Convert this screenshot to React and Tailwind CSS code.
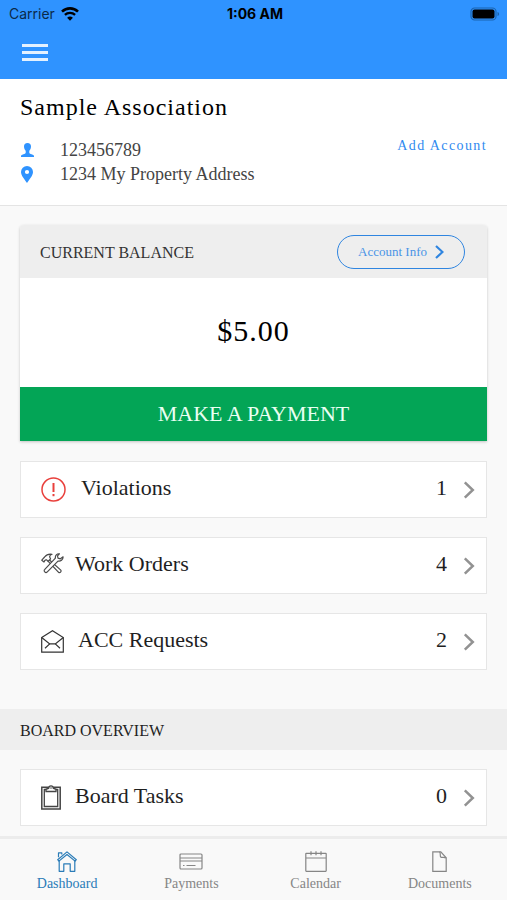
import { useState } from "react";

function WifiIcon() {
  return (
    <svg viewBox="0 0 18 14" className="h-[14px] w-[18px]" fill="none" aria-hidden="true">
      <path d="M1 4.600a11.600 11.600 0 0 1 16 0" stroke="#000" strokeWidth="2.600" />
      <path d="M3.900 7.900a7.400 7.400 0 0 1 10.200 0" stroke="#000" strokeWidth="2.300" />
      <path d="M9 13.800 6.100 10.800a4.200 4.200 0 0 1 5.800 0z" fill="#000" />
    </svg>
  );
}

function BatteryIcon() {
  return (
    <svg viewBox="0 0 31 14" className="h-[14px] w-[31px]" fill="none" aria-hidden="true">
      <rect x="1" y="1" width="25" height="12" rx="3.600" stroke="#1b64b0" strokeWidth="1.200" />
      <rect x="2.500" y="2.500" width="22" height="9" rx="2" fill="#000" />
      <path d="M27.500 5v4c1-.3 1.600-1.100 1.600-2s-.6-1.700-1.600-2z" fill="#1b64b0" />
    </svg>
  );
}

function UserIcon() {
  return (
    <svg viewBox="0 0 13 14" className="h-[14px] w-[13px]" fill="#2f93ff" aria-hidden="true">
      <path d="M6.500 0C8.800 0 10 1.500 10 3.500c0 1.700-.8 3.400-1.700 4.300v1.900c0 .5.300.8.800 1 1.900.6 3.900 1 3.900 2.300V14H0v-1c0-1.300 2-1.700 3.900-2.300.5-.2.800-.5.800-1V7.800C3.800 6.900 3 5.200 3 3.500 3 1.500 4.200 0 6.500 0z" />
    </svg>
  );
}

function PinIcon() {
  return (
    <svg viewBox="0 0 12 17" className="h-[17px] w-3" fill="#2f93ff" aria-hidden="true">
      <path
        fillRule="evenodd"
        d="M6 0a6 6 0 0 1 6 6c0 3.600-3.200 6.600-6 11C3.200 12.600 0 9.600 0 6a6 6 0 0 1 6-6zm0 3.900a2.100 2.100 0 1 0 0 4.200 2.100 2.100 0 0 0 0-4.200z"
      />
    </svg>
  );
}

function AlertIcon() {
  return (
    <svg viewBox="0 0 26 26" className="h-[26px] w-[26px]" fill="none" stroke="#e9403c" aria-hidden="true">
      <circle cx="12.500" cy="12.500" r="11.500" strokeWidth="1.500" />
      <path d="M12.500 6v9" strokeWidth="2" />
      <path d="M12.500 17v2.200" strokeWidth="2" />
    </svg>
  );
}

function ToolsIcon() {
  return (
    <svg viewBox="0 0 23 21" className="-mr-[3px] mb-1 h-[21px] w-[23px]" fill="#fff" stroke="#4a4a4a" strokeWidth="1.200" strokeLinejoin="round" aria-hidden="true">
      {/* hammer */}
      <path d="m8.200 6.800 11.600 10.300c1.100 1.200-.9 3.300-2.200 2.200L7 8.200z" />
      <path d="M.8 7.200 3.600 4C5 2.200 7.500.7 11 1.300 9.300 1.900 8.500 2.800 8.700 4l.9 1.900-2.500 2.300-1.500-1.300c-.8-.3-1.300 0-1.700.5L3 9z" />
      {/* wrench */}
      <path d="M18.400.8c-2.500-.3-4.400 1.800-4 4.300L3.800 16.300c-1.800 1.800.8 4.300 2.500 2.600L17 8.100c2.500.6 5.200-1.400 5.100-4.300l-2.700 2-2.400-.7-.5-2.200z" />
    </svg>
  );
}

function EnvelopeIcon() {
  return (
    <svg viewBox="0 0 23 23" className="h-[23px] w-[23px]" fill="none" stroke="#333" strokeWidth="1.200" aria-hidden="true">
      <path d="M.7 7.500 11.500.8l10.800 6.700v14.700H.7z" />
      <path d="m.7 7.500 8 6.400h5.600l8-6.400" />
      <path d="m4 18.300 4.700-4.400M19 18.300l-4.700-4.400" />
    </svg>
  );
}

function ClipboardIcon() {
  return (
    <svg viewBox="0 0 20 25" className="h-[25px] w-5" fill="none" stroke="#444" aria-hidden="true">
      <path d="M.8 2.200h18.400v21.700H.8z" strokeWidth="1.500" />
      <path d="M3.300 4.500h13.400v17H3.300z" strokeWidth="1.300" />
      <path d="M5 6.500V4.300L7.700 3.200c.2-3.200 4.400-3.200 4.600 0L15 4.300v2.200z" fill="#fff" strokeWidth="1.300" />
      <circle cx="10" cy="3" r=".8" fill="#444" stroke="none" />
    </svg>
  );
}

function HomeIcon() {
  return (
    <svg viewBox="0 0 20 21" className="h-[21px] w-5" fill="none" stroke="currentColor" strokeWidth="1.200" strokeLinejoin="round" aria-hidden="true">
      <path d="M2.200 10v10.300h4.600v-7.500h6.400v7.500h4.600V10" />
      <path d="M1.500 6.200V1.800h3.300v1.600M.7 8.700 10 .9l9.300 7.800-1.200 1.400L10 3.500l-8.100 6.600z" />
    </svg>
  );
}

function CardIcon() {
  return (
    <svg viewBox="0 0 24 17" className="h-[17px] w-6" fill="none" stroke="currentColor" strokeWidth="1.200" aria-hidden="true">
      <rect x="1" y="1" width="22" height="15" rx="1" />
      <path d="M1 5h22M1 8h22M4 12.500h1.500M7.500 12.500h9" />
    </svg>
  );
}

function CalendarIcon() {
  return (
    <svg viewBox="0 0 22 21" className="h-[21px] w-[22px]" fill="none" stroke="currentColor" strokeWidth="1.200" aria-hidden="true">
      <rect x=".8" y="2.300" width="20.400" height="18" rx=".5" />
      <path d="M1 7h20M6 .3v3.900M11 .3v3.900M16 .3v3.900" />
    </svg>
  );
}

function DocumentIcon() {
  return (
    <svg viewBox="0 0 15 21" className="h-[21px] w-[15px]" fill="none" stroke="currentColor" strokeWidth="1.200" aria-hidden="true">
      <path d="M.8.8h8l5.400 6v13.500H.8z" />
      <path d="M7.500.8c1.500 1.200.2 4.200 1.200 5.200s3.800-.2 5.300 1" />
    </svg>
  );
}

function Chevron() {
  return (
    <svg viewBox="0 0 12 18" className="h-[18px] w-3" fill="none" stroke="#929292" strokeWidth="2.500" aria-hidden="true">
      <path d="m1.800 1.300 8 7.700-8 7.700" />
    </svg>
  );
}

function Row({ icon: Icon, label, count }) {
  return (
    <a
      href="#"
      className="flex h-[57px] items-center border border-[#e6e6e6] bg-white pr-[11px] pl-5 text-[22px] leading-7 text-[#1f1f1f]"
    >
      <span className="flex items-center gap-[14px]">
        <Icon />
        <span className="pb-1">{label}</span>
      </span>
      <span className="ml-auto flex items-center gap-4">
        <span className="pb-1">{count}</span>
        <Chevron />
      </span>
    </a>
  );
}

const accountRows = [
  { label: "Violations", count: 1, icon: AlertIcon },
  { label: "Work Orders", count: 4, icon: ToolsIcon },
  { label: "ACC Requests", count: 2, icon: EnvelopeIcon },
];

const tabs = [
  { label: "Dashboard", icon: HomeIcon },
  { label: "Payments", icon: CardIcon },
  { label: "Calendar", icon: CalendarIcon },
  { label: "Documents", icon: DocumentIcon },
];

export default function App() {
  const [activeTab, setActiveTab] = useState("Dashboard");

  return (
    <div className="flex min-h-screen flex-col bg-[#f9f9f9] font-['Liberation_Serif',serif] text-black">
      <header className="h-[79px] bg-[#2f93ff]">
        <div className="grid h-7 grid-cols-3 items-center pr-[6px] pl-[9px] font-[Inter,sans-serif] text-[14px] leading-5">
          <div className="flex items-center gap-[6px] text-[#0b2a4a]">
            Carrier
            <WifiIcon />
          </div>
          <div className="text-center font-bold">1:06 AM</div>
          <div className="flex justify-end">
            <BatteryIcon />
          </div>
        </div>
        <button type="button" aria-label="Menu" className="mt-4 ml-[22px] flex w-[26px] flex-col gap-1">
          <span className="h-[3px] w-full bg-[#e3f1ff]" />
          <span className="h-[3px] w-full bg-[#e3f1ff]" />
          <span className="h-[3px] w-full bg-[#e3f1ff]" />
        </button>
      </header>

      <section className="flex h-[127px] items-start justify-between border-b border-[#e4e4e4] bg-white px-5 pt-[13px]">
        <div>
          <h1 className="text-[24px] leading-[30px] tracking-[1px]">Sample Association</h1>
          <div className="mt-4 pl-px text-[18px] leading-6 text-[#444]">
            <p className="flex items-center gap-[26px]">
              <UserIcon />
              123456789
            </p>
            <p className="flex items-center gap-[27px]">
              <PinIcon />
              1234 My Property Address
            </p>
          </div>
        </div>
        <a href="#" className="mt-11 text-[14px] leading-5 tracking-widest text-[#2f8af0]">
          Add Account
        </a>
      </section>

      <main className="pb-[9px]">
        <div className="px-5 pt-[19px]">
          <div className="rounded-t-sm shadow-[0_1px_3px_rgba(0,0,0,0.22)]">
            <div className="flex h-[53px] items-center justify-between rounded-t-sm bg-[#eee] pr-[22px] pl-5">
              <h2 className="pt-[3px] text-[16px] leading-5 text-[#333]">CURRENT BALANCE</h2>
              <button
                type="button"
                className="flex h-[34px] w-32 items-center justify-center gap-2 rounded-full border border-[#2f85e0] text-[13px] leading-4 text-[#4a94e6]"
              >
                Account Info
                <svg viewBox="0 0 9 14" className="h-[14px] w-[9px]" fill="none" stroke="#2f85e0" strokeWidth="2.200" aria-hidden="true">
                  <path d="m1 1 6.500 6L1 13" />
                </svg>
              </button>
            </div>
            <p className="flex h-[109px] items-center justify-center bg-white pb-1 text-[30px] leading-9 tracking-[1px]">
              $5.00
            </p>
            <button type="button" className="block h-[54px] w-full bg-[#03a556] text-[22px] leading-7 text-[#e9fff2]">
              MAKE A PAYMENT
            </button>
          </div>

          <div className="mt-5 flex flex-col gap-[19px]">
            {accountRows.map((row) => (
              <Row key={row.label} {...row} />
            ))}
          </div>
        </div>

        <h2 className="mt-[39px] flex h-[41px] items-center bg-[#eee] px-5 pt-[3px] text-[16px] leading-5 text-[#1f1f1f]">
          BOARD OVERVIEW
        </h2>
        <div className="px-5 pt-[19px]">
          <Row label="Board Tasks" count={0} icon={ClipboardIcon} />
        </div>
      </main>

      <nav className="sticky bottom-0 mt-auto grid h-16 grid-cols-4 border-t-[3px] border-[#ececec] bg-[#f9f9f9] px-[5px]">
        {tabs.map(({ label, icon: Icon }) => (
          <button
            key={label}
            type="button"
            onClick={() => setActiveTab(label)}
            className={`flex flex-col items-center pt-[10px] text-[14px] leading-5 ${
              activeTab === label ? "text-[#2a7cb8]" : "text-[#868686]"
            }`}
          >
            <span className="mb-px flex h-6 items-center">
              <Icon />
            </span>
            {label}
          </button>
        ))}
      </nav>
    </div>
  );
}
